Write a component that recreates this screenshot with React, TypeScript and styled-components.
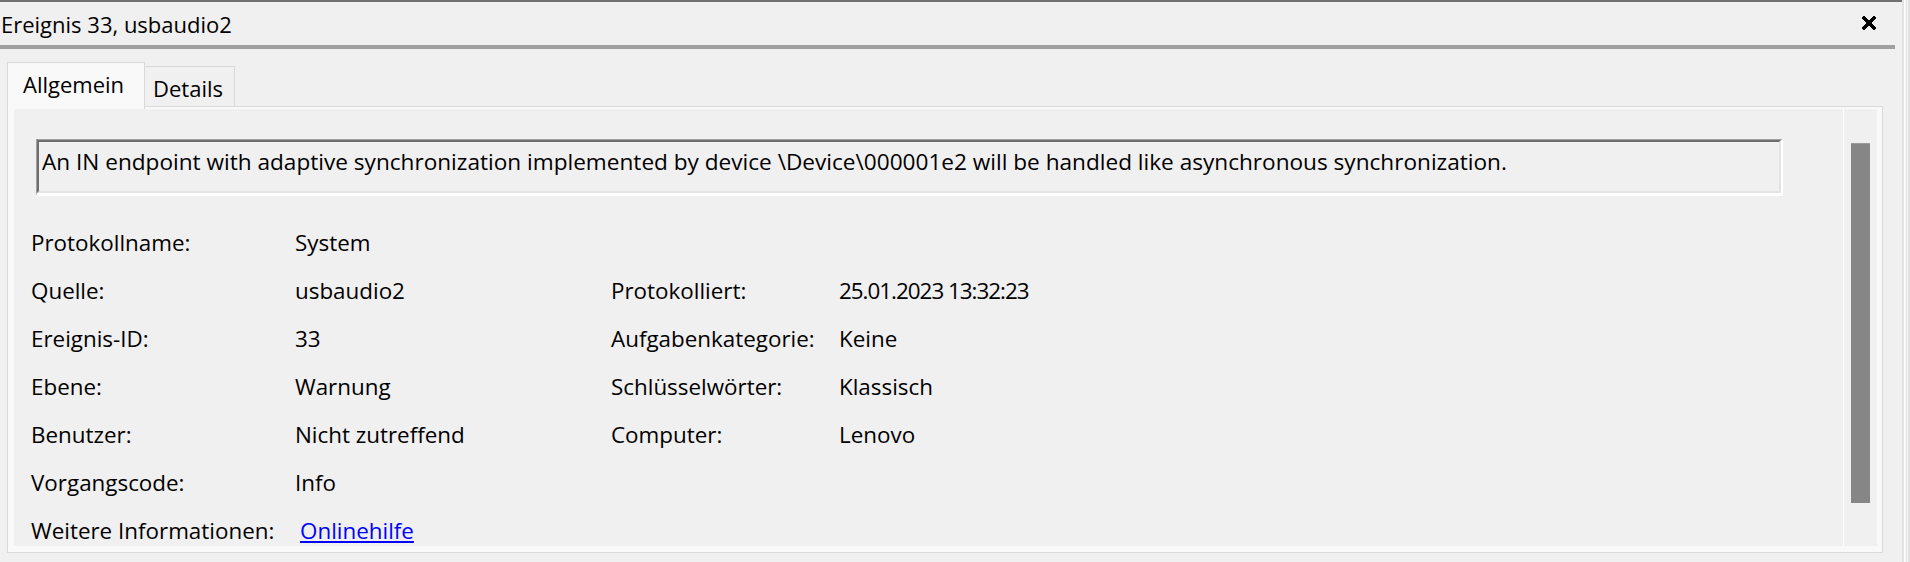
import React from "react";
import styled, { createGlobalStyle } from "styled-components";

const GlobalStyle = createGlobalStyle`
  html, body {
    margin: 0;
    padding: 0;
    background: #f0f0f0;
  }
  body {
    font-family: "Open Sans", "Noto Sans", sans-serif;
    color: #000;
    overflow: hidden;
  }
`;

const Window = styled.div`
  display: flex;
  width: 1910px;
  height: 562px;
  background: #f0f0f0;
  overflow: hidden;
`;

const Main = styled.div`
  flex: 0 0 1902px;
  display: flex;
  flex-direction: column;
  border-top: 2px solid #717171;
`;

const RightEdge = styled.div`
  flex: 1;
  background: linear-gradient(
    to right,
    #e3e3e3 0 2px,
    #fafafa 2px 4px,
    #dddddd 4px 5px,
    #f7f7f7 5px 6px,
    #e2e2e2 6px 8px
  );
`;

const TitleBar = styled.div`
  display: flex;
  justify-content: space-between;
  align-items: flex-start;
  height: 43px;
  margin-right: 7px;
  padding: 0 18px 0 1px;
  border-bottom: 4px solid #a0a0a0;
`;

const Title = styled.div`
  padding-top: 7px;
  font-size: 22px;
  line-height: 30px;
  white-space: nowrap;
`;

const CloseIcon = styled.svg`
  display: block;
  margin-top: 13px;
  width: 16px;
  height: 16px;
`;

const TabStrip = styled.div`
  display: flex;
  align-items: flex-end;
  height: 57px;
  padding-left: 7px;
  position: relative;
  z-index: 1;
`;

const Tab = styled.div<{ $active?: boolean; $w: number; $pl: number }>`
  box-sizing: border-box;
  width: ${(p) => p.$w}px;
  height: ${(p) => (p.$active ? 47 : 40)}px;
  margin-bottom: ${(p) => (p.$active ? -3 : 0)}px;
  padding: 6px 0 0 ${(p) => p.$pl}px;
  font-size: 22px;
  line-height: 30px;
  white-space: nowrap;
  background: ${(p) => (p.$active ? "#f9f9f9" : "#f0f0f0")};
  border: 1px solid #d9d9d9;
  border-bottom: none;
  border-left-width: ${(p) => (p.$active ? 1 : 0)}px;
`;

const TabPage = styled.div`
  box-sizing: border-box;
  margin-left: 7px;
  width: 1876px;
  height: 447px;
  padding: 2px 5px 6px 6px;
  background: #f9f9f9;
  border: 1px solid #dadada;
`;

const PageInner = styled.div`
  display: flex;
  height: 100%;
  background: #f0f0f0;
`;

const ScrollContent = styled.div`
  flex: 1;
  overflow: hidden;
  padding: 30px 0 0 17px;
`;

const Divider = styled.div`
  width: 1px;
  background: #ffffff;
`;

const ScrollBar = styled.div`
  box-sizing: border-box;
  width: 33px;
  padding: 34px 0 0 7px;
`;

const Thumb = styled.div`
  width: 19px;
  height: 360px;
  background: #868686;
  border-top: 1px solid #9a9a9a;
  box-sizing: border-box;
`;

const MessageBox = styled.div`
  box-sizing: border-box;
  width: 1747px;
  height: 57px;
  margin-left: 5px;
  border-style: solid;
  border-color: #a0a0a0 #ffffff #ffffff #a0a0a0;
  border-width: 1px 2px 3px 1px;
`;

const MessageText = styled.div`
  box-sizing: border-box;
  height: 100%;
  padding: 5px 3px 0;
  border-style: solid;
  border-color: #6e6e6e #e3e3e3 #e3e3e3 #6e6e6e;
  border-width: 2px;
  font-size: 22.6px;
  line-height: 30px;
  white-space: nowrap;
  overflow: hidden;
`;

const InfoGrid = styled.div`
  display: grid;
  grid-template-columns: 264px 316px 228px 1fr;
  row-gap: 20px;
  margin-top: 33px;
  font-size: 22.4px;
  line-height: 28px;
`;

const Label = styled.div`
  white-space: nowrap;
  color: #000;
`;

const Value = styled.div<{ $tight?: boolean }>`
  white-space: nowrap;
  color: #000;
  letter-spacing: ${(p) => (p.$tight ? "-1px" : "normal")};
`;

const Link = styled.a`
  margin-left: 5px;
  color: #0000ff;
  text-decoration: underline;
  text-underline-offset: 2px;
  white-space: nowrap;
  cursor: pointer;
`;

type Row = {
  label: string;
  value: React.ReactNode;
  label2?: string;
  value2?: string;
  tight?: boolean;
};

const rows: Row[] = [
  { label: "Protokollname:", value: "System" },
  { label: "Quelle:", value: "usbaudio2", label2: "Protokolliert:", value2: "25.01.2023 13:32:23", tight: true },
  { label: "Ereignis-ID:", value: "33", label2: "Aufgabenkategorie:", value2: "Keine" },
  { label: "Ebene:", value: "Warnung", label2: "Schlüsselwörter:", value2: "Klassisch" },
  { label: "Benutzer:", value: "Nicht zutreffend", label2: "Computer:", value2: "Lenovo" },
  { label: "Vorgangscode:", value: "Info" },
  { label: "Weitere Informationen:", value: <Link href="#">Onlinehilfe</Link> },
];

export default function App() {
  return (
    <>
      <GlobalStyle />
      <Window>
        <Main>
          <TitleBar>
            <Title>Ereignis 33, usbaudio2</Title>
            <CloseIcon viewBox="0 0 16 16" shapeRendering="crispEdges">
              <path d="M3 3 L13 13 M13 3 L3 13" stroke="#000" strokeWidth="3.4" strokeLinecap="square" fill="none" />
            </CloseIcon>
          </TitleBar>
          <TabStrip>
            <Tab $active $w={138} $pl={15}>
              Allgemein
            </Tab>
            <Tab $w={90} $pl={8}>
              Details
            </Tab>
          </TabStrip>
          <TabPage>
            <PageInner>
              <ScrollContent>
                <MessageBox>
                  <MessageText>
                    An IN endpoint with adaptive synchronization implemented by device \Device\000001e2 will be handled
                    like asynchronous synchronization.
                  </MessageText>
                </MessageBox>
                <InfoGrid>
                  {rows.map((r) => (
                    <React.Fragment key={r.label}>
                      <Label>{r.label}</Label>
                      <Value>{r.value}</Value>
                      <Label>{r.label2 ?? ""}</Label>
                      <Value $tight={r.tight}>{r.value2 ?? ""}</Value>
                    </React.Fragment>
                  ))}
                </InfoGrid>
              </ScrollContent>
              <Divider />
              <ScrollBar>
                <Thumb />
              </ScrollBar>
            </PageInner>
          </TabPage>
        </Main>
        <RightEdge />
      </Window>
    </>
  );
}
